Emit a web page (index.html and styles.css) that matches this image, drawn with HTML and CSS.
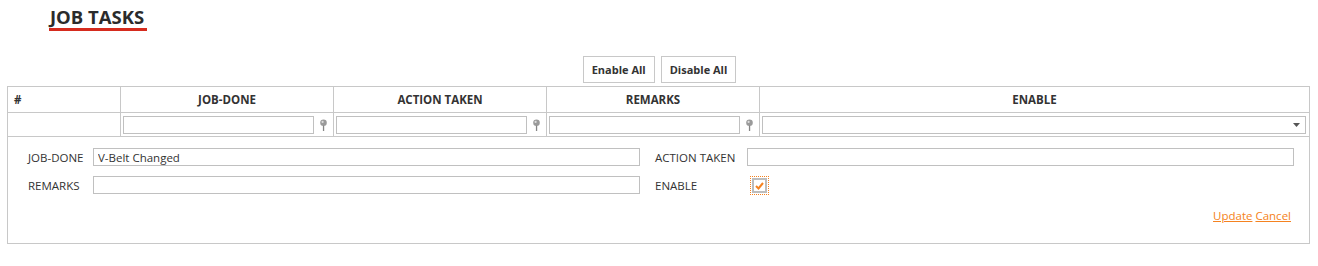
FILE: index.html
```html
<!DOCTYPE html>
<html lang="en">
<head>
    <meta charset="UTF-8">
    <title>Job Tasks</title>
    <link rel="stylesheet" href="styles.css">
</head>
<body>

    <h2 class="page-title"><span>JOB TASKS</span></h2>

    <div class="toolbar">
        <button class="btn">Enable All</button>
        <button class="btn">Disable All</button>
    </div>

    <table class="grid">
        <colgroup>
            <col class="col-num">
            <col class="col-mid">
            <col class="col-mid">
            <col class="col-mid">
            <col>
        </colgroup>
        <thead>
            <tr class="head-row">
                <th class="num">#</th>
                <th>JOB-DONE</th>
                <th>ACTION TAKEN</th>
                <th>REMARKS</th>
                <th>ENABLE</th>
            </tr>
            <tr class="filter-row">
                <td></td>
                <td><div class="filter"><input type="text"><svg class="pin" width="9" height="12" viewBox="0 0 9 12"><circle cx="4.5" cy="3.8" r="3.3" fill="#9a9a9a"/><circle cx="3.6" cy="2.9" r="1.1" fill="#dcdcdc"/><rect x="3.9" y="6.5" width="1.3" height="5.5" fill="#858585"/></svg></div></td>
                <td><div class="filter"><input type="text"><svg class="pin" width="9" height="12" viewBox="0 0 9 12"><circle cx="4.5" cy="3.8" r="3.3" fill="#9a9a9a"/><circle cx="3.6" cy="2.9" r="1.1" fill="#dcdcdc"/><rect x="3.9" y="6.5" width="1.3" height="5.5" fill="#858585"/></svg></div></td>
                <td><div class="filter"><input type="text"><svg class="pin" width="9" height="12" viewBox="0 0 9 12"><circle cx="4.5" cy="3.8" r="3.3" fill="#9a9a9a"/><circle cx="3.6" cy="2.9" r="1.1" fill="#dcdcdc"/><rect x="3.9" y="6.5" width="1.3" height="5.5" fill="#858585"/></svg></div></td>
                <td><div class="combo"><svg width="7" height="4" viewBox="0 0 7 4"><path d="M0 0H7L3.5 4Z" fill="#555"/></svg></div></td>
            </tr>
        </thead>
        <tbody>
            <tr>
                <td colspan="5" class="edit-cell">
                    <div class="edit-form">
                        <label>JOB-DONE</label>
                        <input type="text" value="V-Belt Changed">
                        <label class="second">ACTION TAKEN</label>
                        <input type="text">
                        <label>REMARKS</label>
                        <input type="text">
                        <label class="second">ENABLE</label>
                        <div><span class="check"><svg width="9" height="8" viewBox="0 0 9 8"><path d="M1 4L3.5 6.5L8 1" stroke="#f58220" stroke-width="2" fill="none"/></svg></span></div>
                    </div>
                    <div class="actions">
                        <a href="#">Update</a> <a href="#">Cancel</a>
                    </div>
                </td>
            </tr>
        </tbody>
    </table>

</body>
</html>
```

FILE: styles.css
```css
body {
    margin: 0;
    font-family: "Open Sans", Arial, sans-serif;
    font-size: 11px;
    color: #333;
    background: #fff;
}
.page-title {
    margin: 0;
    padding: 6px 0 0 49px;
    font-size: 18.5px;
    font-weight: bold;
    color: #2b2b2b;
    line-height: 22px;
}
.page-title span {
    display: inline-block;
    padding: 0 3px 0 1px;
    border-bottom: 3px solid #d52b1e;
}
.toolbar {
    display: flex;
    justify-content: center;
    gap: 6px;
    margin-top: 25px;
    padding-left: 1px;
}
.btn {
    font-family: inherit;
    font-size: 11px;
    font-weight: bold;
    color: #333;
    background: #fff;
    border: 1px solid #c8c8c8;
    height: 27px;
    padding: 0 8px;
}
.grid {
    margin: 3px 0 0 7px;
    width: 1303px;
    border-collapse: collapse;
    table-layout: fixed;
    border: 1px solid #c8c8c8;
}
.col-num { width: 113px; }
.col-mid { width: 213px; }
.grid th, .grid td {
    border: 1px solid #c8c8c8;
    padding: 0;
}
.head-row th {
    height: 25px;
    font-weight: bold;
    font-size: 11.5px;
    color: #333;
    text-align: center;
}
.head-row th.num {
    text-align: left;
    padding-left: 6px;
}
.filter-row td {
    height: 23px;
}
.filter {
    display: flex;
    align-items: center;
    gap: 4px;
    padding: 0 4px 0 2px;
}
.filter input {
    flex: 1;
    min-width: 0;
    height: 18px;
    box-sizing: border-box;
    border: 1px solid #c0c0c0;
}
.pin { flex: none; margin: 0 1px; }
.combo {
    margin: 0 3px 0 2px;
    height: 18px;
    box-sizing: border-box;
    border: 1px solid #c0c0c0;
    display: flex;
    align-items: center;
    justify-content: flex-end;
    padding-right: 5px;
}
.edit-cell {
    padding: 11px 15px 20px 20px !important;
    vertical-align: top;
}
.edit-form {
    display: grid;
    grid-template-columns: 65px 1fr 107px 1fr;
    row-gap: 10px;
    align-items: center;
}
.edit-form label {
    font-size: 11.5px;
    color: #333;
}
.edit-form label.second {
    padding-left: 15px;
}
.edit-form input {
    height: 18px;
    box-sizing: border-box;
    border: 1px solid #c0c0c0;
    font-family: inherit;
    font-size: 11.5px;
    color: #333;
    padding: 0 4px;
}
.check {
    display: inline-flex;
    align-items: center;
    justify-content: center;
    width: 11px;
    height: 11px;
    margin-left: 5px;
    border: 2px solid #bdbdbd;
    outline: 1px dotted #f58220;
    outline-offset: 1px;
    vertical-align: middle;
}
.actions {
    text-align: right;
    margin-top: 14px;
    padding-right: 3px;
    font-size: 11.5px;
}
.actions a {
    color: #f58220;
}
```
